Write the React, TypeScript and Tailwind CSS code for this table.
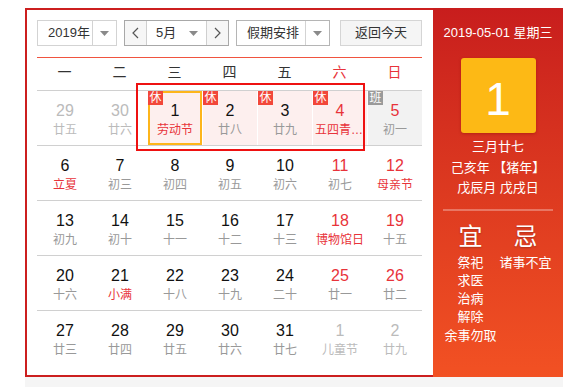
import React from 'react'

type Day = {
  n: number
  l: string
  numRed?: boolean
  lunRed?: boolean
  other?: boolean
  badge?: '休' | '班'
  bg?: 'pink' | 'gray'
  sel?: boolean
}

const WEEK = ['一', '二', '三', '四', '五', '六', '日']

const ROWS: Day[][] = [
  [
    { n: 29, l: '廿五', other: true },
    { n: 30, l: '廿六', other: true },
    { n: 1, l: '劳动节', lunRed: true, badge: '休', bg: 'pink', sel: true },
    { n: 2, l: '廿八', badge: '休', bg: 'pink' },
    { n: 3, l: '廿九', badge: '休', bg: 'pink' },
    { n: 4, l: '五四青年节', numRed: true, lunRed: true, badge: '休', bg: 'pink' },
    { n: 5, l: '初一', numRed: true, badge: '班', bg: 'gray' },
  ],
  [
    { n: 6, l: '立夏', lunRed: true },
    { n: 7, l: '初三' },
    { n: 8, l: '初四' },
    { n: 9, l: '初五' },
    { n: 10, l: '初六' },
    { n: 11, l: '初七', numRed: true },
    { n: 12, l: '母亲节', numRed: true, lunRed: true },
  ],
  [
    { n: 13, l: '初九' },
    { n: 14, l: '初十' },
    { n: 15, l: '十一' },
    { n: 16, l: '十二' },
    { n: 17, l: '十三' },
    { n: 18, l: '博物馆日', numRed: true, lunRed: true },
    { n: 19, l: '十五', numRed: true },
  ],
  [
    { n: 20, l: '十六' },
    { n: 21, l: '小满', lunRed: true },
    { n: 22, l: '十八' },
    { n: 23, l: '十九' },
    { n: 24, l: '二十' },
    { n: 25, l: '廿一', numRed: true },
    { n: 26, l: '廿二', numRed: true },
  ],
  [
    { n: 27, l: '廿三' },
    { n: 28, l: '廿四' },
    { n: 29, l: '廿五' },
    { n: 30, l: '廿六' },
    { n: 31, l: '廿七' },
    { n: 1, l: '儿童节', other: true },
    { n: 2, l: '廿九', other: true },
  ],
]

const YI = ['祭祀', '求医', '治病', '解除', '余事勿取']
const JI = ['诸事不宜']

function Caret() {
  return (
    <svg width="9" height="5" viewBox="0 0 9 5">
      <path d="M0 0h9L4.5 5z" fill="#8a8a8a" />
    </svg>
  )
}

function Chevron({ dir }: { dir: 'l' | 'r' }) {
  return (
    <svg width="7" height="12" viewBox="0 0 7 12">
      <path
        d={dir === 'l' ? 'M6 1L1 6l5 5' : 'M1 1l5 5-5 5'}
        fill="none"
        stroke="#555"
        strokeWidth="1.2"
      />
    </svg>
  )
}

function Cell({ d }: { d: Day }) {
  const numColor = d.other ? 'text-[#bbb]' : d.numRed ? 'text-[#e8333a]' : 'text-[#111]'
  const lunColor = d.other ? 'text-[#bbb]' : d.lunRed ? 'text-[#e8333a]' : 'text-[#999]'
  const bg = d.bg === 'pink' ? 'bg-[#fdefee]' : d.bg === 'gray' ? 'bg-[#f2f2f2]' : ''
  return (
    <div className="w-[55px] h-[54px]">
      <div className={`relative ml-px h-full ${bg} flex flex-col items-center pt-[11px]`}>
        <span className={`text-[16px] leading-[18px] ${numColor}`}>{d.n}</span>
        <span className={`mt-[3px] w-[50px] truncate text-center text-[12px] leading-[14px] ${lunColor}`}>{d.l}</span>
        {d.sel && <div className="absolute inset-0 border-2 border-[#fdb51b]" />}
        {d.badge && (
          <span
            className={`absolute left-0 top-0 flex h-[14px] w-[15px] items-center justify-center text-[12px] leading-none text-white ${
              d.badge === '休' ? 'bg-[#f2473a]' : 'bg-[#9a9a9a]'
            }`}
          >
            {d.badge}
          </span>
        )}
      </div>
    </div>
  )
}

export default function App() {
  return (
    <div className="min-h-[387px] bg-white pl-[25px] pt-[8px] font-['Liberation_Sans','Noto_Sans_CJK_SC',sans-serif]">
      <div className="flex w-[538px]">
        {/* calendar */}
        <div className="h-[369px] w-[408px] border-2 border-r-0 border-[#cc1f1f] bg-white pl-[10px] pt-[10px]">
          <div className="flex h-[26px] text-[13px] text-[#333]">
            <div className="flex w-[80px] border border-[#d3d3d3]">
              <div className="flex flex-1 items-center pl-[10px]">2019年</div>
              <div className="flex w-[24px] items-center justify-center border-l border-[#d3d3d3]">
                <Caret />
              </div>
            </div>
            <div className="ml-[7px] flex w-[105px] border border-[#a8a8a8]">
              <div className="flex w-[22px] items-center justify-center border-r border-[#cfcfcf] bg-[#f6f6f6]">
                <Chevron dir="l" />
              </div>
              <div className="flex flex-1 items-center pl-[9px] pr-[8px]">
                <span>5月</span>
                <span className="ml-auto flex">
                  <Caret />
                </span>
              </div>
              <div className="flex w-[22px] items-center justify-center border-l border-[#cfcfcf] bg-[#f6f6f6]">
                <Chevron dir="r" />
              </div>
            </div>
            <div className="ml-[7px] flex w-[94px] border border-[#b5b5b5]">
              <div className="flex flex-1 items-center pl-[10px]">假期安排</div>
              <div className="flex w-[24px] items-center justify-center border-l border-[#d3d3d3]">
                <Caret />
              </div>
            </div>
            <div className="ml-[10px] flex w-[82px] items-center justify-center border border-[#d5d5d5] bg-[#f5f5f5]">
              返回今天
            </div>
          </div>

          <div className="mt-[11px] h-px w-[385px] bg-[#f0533f]" />

          <div className="flex h-[33px] w-[385px] border-b border-[#d0d0d0] pt-[5px] text-[14px] leading-[18px]">
            {WEEK.map((w, i) => (
              <div key={w} className={`w-[55px] text-center ${i >= 5 ? 'text-[#e8333a]' : 'text-[#333]'}`}>
                {w}
              </div>
            ))}
          </div>

          {ROWS.map((row, ri) => (
            <div
              key={ri}
              className={`relative flex w-[385px] ${ri < ROWS.length - 1 ? 'h-[55px] border-b border-[#d0d0d0]' : 'h-[54px]'}`}
            >
              {row.map((d, ci) => (
                <Cell key={ci} d={d} />
              ))}
              {ri === 0 && (
                <div className="pointer-events-none absolute left-[99px] top-[-8px] h-[68px] w-[229px] border-2 border-[#ee1111]" />
              )}
            </div>
          ))}
        </div>

        {/* side panel */}
        <div className="flex h-[369px] w-[130px] flex-col items-center bg-gradient-to-b from-[#c81d1d] to-[#f25123] pt-[16px] text-[13px] text-white">
          <div className="leading-[18px]">2019-05-01 星期三</div>
          <div className="mt-[16px] flex h-[75px] w-[75px] items-center justify-center rounded-[3px] bg-[#fdb915] pt-[6px] text-[46px] leading-none shadow-[0_1px_3px_rgba(120,0,0,0.35)]">
            1
          </div>
          <div className="mt-[4px] flex flex-col items-center leading-[20.5px]">
            <span>三月廿七</span>
            <span className="whitespace-pre">己亥年 【猪年】</span>
            <span>戊辰月 戊戌日</span>
          </div>
          <div className="mt-[10px] h-[2px] w-[110px] bg-white/30" />
          <div className="mt-[12px] flex w-[110px]">
            <div className="flex w-[55px] flex-col items-center">
              <span className="text-[24px] leading-[28px] [text-shadow:0_1px_2px_rgba(0,0,0,0.25)]">宜</span>
              <div className="mt-[3px] flex flex-col items-center leading-[18.3px]">
                {YI.map((t) => (
                  <span key={t} className="whitespace-nowrap">{t}</span>
                ))}
              </div>
            </div>
            <div className="flex w-[55px] flex-col items-center">
              <span className="text-[24px] leading-[28px] [text-shadow:0_1px_2px_rgba(0,0,0,0.25)]">忌</span>
              <div className="mt-[3px] flex flex-col items-center leading-[18.3px]">
                {JI.map((t) => (
                  <span key={t} className="whitespace-nowrap">{t}</span>
                ))}
              </div>
            </div>
          </div>
        </div>
      </div>
      <div className="h-[10px] w-[538px] bg-[#f5f5f5]" />
    </div>
  )
}
